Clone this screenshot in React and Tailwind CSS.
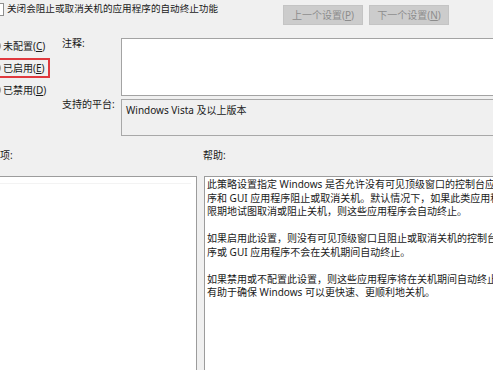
import React from 'react';

const radios = [
  { label: '未配置', key: 'C', selected: false },
  { label: '已启用', key: 'E', selected: true },
  { label: '已禁用', key: 'D', selected: false },
];

const helpLines = [
  '此策略设置指定 Windows 是否允许没有可见顶级窗口的控制台应用程',
  '序和 GUI 应用程序阻止或取消关机。默认情况下，如果此类应用程序无',
  '限期地试图取消或阻止关机，则这些应用程序会自动终止。',
  '',
  '如果启用此设置，则没有可见顶级窗口且阻止或取消关机的控制台应用程',
  '序或 GUI 应用程序不会在关机期间自动终止。',
  '',
  '如果禁用或不配置此设置，则这些应用程序将在关机期间自动终止，这',
  '有助于确保 Windows 可以更快速、更顺利地关机。',
];

const App = () => {
  return (
    <div className="w-[493px] h-[370px] overflow-hidden bg-[#f0f0f0] text-[10px] text-[#1a1a1a] font-['Noto_Sans','Noto_Sans_CJK_SC',sans-serif]">
      {/* Title + navigation */}
      <div className="flex h-[30px]">
        <div className="flex items-start gap-[3px] pt-[2px] whitespace-nowrap">
          <div className="-ml-[8px] mt-[1px] w-[12px] h-[13px] border border-[#8f8f8f] bg-white" />
          <span className="leading-[14px] text-[9.6px]">关闭会阻止或取消关机的应用程序的自动终止功能</span>
        </div>
        <div className="ml-auto mr-[44px] mt-[5px] flex gap-[6px]">
          <div className="w-[80px] h-[20px] bg-[#cccccc] border border-[#c4c4c4] flex items-center justify-center text-[#8c8c8c] whitespace-nowrap">
            上一个设置(<u>P</u>)
          </div>
          <div className="w-[80px] h-[20px] bg-[#cccccc] border border-[#c4c4c4] flex items-center justify-center text-[#8c8c8c] whitespace-nowrap">
            下一个设置(<u>N</u>)
          </div>
        </div>
      </div>

      {/* Options + comment + platform */}
      <div className="flex h-[110px]">
        <div className="w-[58px] flex flex-col gap-[2px] pt-[6px]">
          {radios.map((r) => (
            <div
              key={r.key}
              className={`-ml-[13px] w-[63px] h-[20px] border-2 flex items-center gap-[2px] whitespace-nowrap ${
                r.selected ? 'border-[#e0393e]' : 'border-transparent'
              }`}
            >
              <div className="w-[12px] h-[12px] rounded-full border border-[#9a9a9a] bg-white flex items-center justify-center shrink-0">
                {r.selected && <div className="w-[6px] h-[6px] rounded-full bg-[#333]" />}
              </div>
              <span className="leading-[14px]">
                {r.label}(<u>{r.key}</u>)
              </span>
            </div>
          ))}
        </div>
        <div className="w-[59px] ml-[4px] pt-[6px] flex flex-col whitespace-nowrap">
          <span className="leading-[14px]">注释:</span>
          <span className="leading-[14px] mt-[47px]">支持的平台:</span>
        </div>
        <div className="flex-1 -mr-[4px] pt-[8px] flex flex-col">
          <div className="h-[58px] bg-white border border-[#a3a3a3]" />
          <div className="mt-[3px] h-[37px] border border-[#a8a8a8] px-[4px] pt-[3px] leading-[14px] whitespace-nowrap">
            Windows Vista 及以上版本
          </div>
        </div>
      </div>

      {/* Section labels */}
      <div className="flex h-[36px] pt-[8px] leading-[14px] whitespace-nowrap">
        <span className="w-[203px] -ml-[10px]">选项:</span>
        <span className="ml-[10px]">帮助:</span>
      </div>

      {/* Panels */}
      <div className="flex gap-[7px] h-[200px]">
        <div className="-ml-[4px] w-[201px] bg-white border-t border-r border-[#9c9c9c]">
          <div className="h-[7px] border-b border-[#f3f3f3] mr-[5px]" />
        </div>
        <div className="flex-1 -mr-[10px] bg-white border-t border-l border-[#9c9c9c] pl-[2px] pt-[1px] overflow-hidden">
          {helpLines.map((line, i) => (
            <div key={i} className="h-[13.5px] leading-[13.5px] whitespace-nowrap">
              {line}
            </div>
          ))}
        </div>
      </div>
    </div>
  );
};

export default App;
